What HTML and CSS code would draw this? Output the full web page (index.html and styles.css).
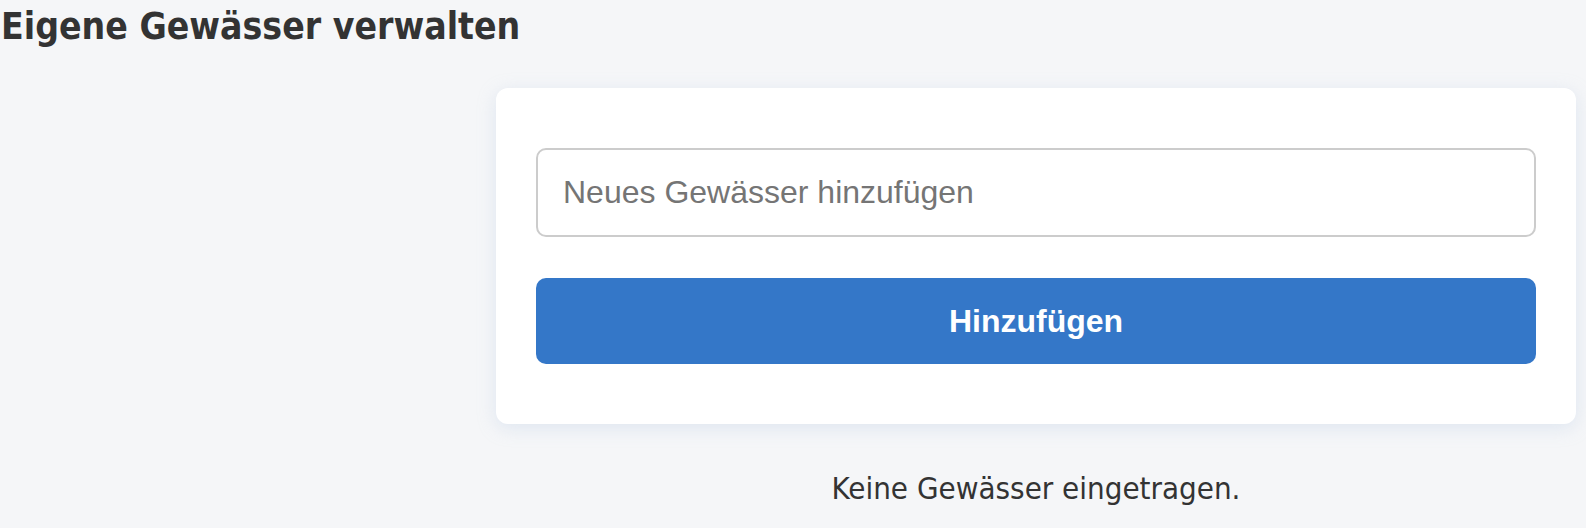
FILE: index.html
```html
<!DOCTYPE html>
<html lang="de">
<head>
<meta charset="utf-8">
<title>Eigene Gewässer verwalten</title>
<link rel="stylesheet" href="styles.css">
</head>
<body>
<h1 class="page-title">Eigene Gewässer verwalten</h1>
<main class="content">
  <form class="card" onsubmit="return false">
    <input class="text-input" type="text" placeholder="Neues Gewässer hinzufügen">
    <button class="primary-btn" type="submit">Hinzufügen</button>
  </form>
  <p class="empty-note">Keine Gewässer eingetragen.</p>
</main>
</body>
</html>
```
FILE: styles.css
```css
html, body {
  margin: 0;
  padding: 0;
}
body {
  background: #f5f6f8;
  color: #333333;
  font-family: "DejaVu Sans Condensed", "DejaVu Sans", Verdana, sans-serif;
  width: 1586px;
  height: 528px;
  overflow: hidden;
}
.page-title {
  margin: 0;
  padding: 5px 0 0 1px;
  font-size: 37px;
  line-height: 44px;
  font-weight: bold;
  color: #333333;
}
.content {
  margin: 39px 0 0 496px;
  width: 1080px;
  display: flex;
  flex-direction: column;
}
.card {
  background: #ffffff;
  border-radius: 12px;
  box-shadow: 0 4px 18px rgba(180, 200, 225, 0.35);
  padding: 60px 40px;
  display: flex;
  flex-direction: column;
  gap: 41px;
}
.text-input {
  box-sizing: border-box;
  height: 89px;
  width: 100%;
  border: 2px solid #cccccc;
  border-radius: 10px;
  padding: 0 25px;
  font-family: "Liberation Sans", Arial, sans-serif;
  font-size: 32px;
  color: #333333;
  background: #ffffff;
  outline: none;
}
.text-input::placeholder {
  color: #757575;
}
.primary-btn {
  height: 86px;
  width: 100%;
  border: none;
  border-radius: 10px;
  background: #3477c8;
  color: #ffffff;
  font-family: "Liberation Sans", Arial, sans-serif;
  font-size: 32px;
  font-weight: bold;
  cursor: pointer;
}
.empty-note {
  margin: 44px 0 0 0;
  text-align: center;
  font-size: 31px;
  line-height: 40px;
  color: #333333;
}
```
